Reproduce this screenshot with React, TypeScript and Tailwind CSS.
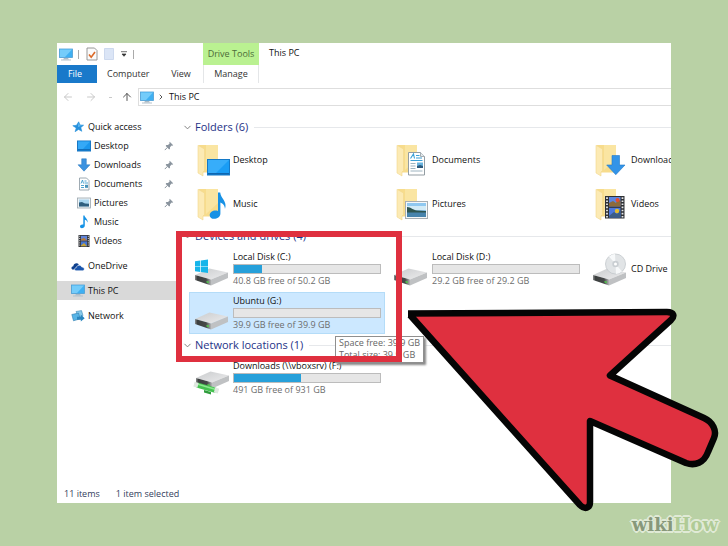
import type { ReactNode } from "react";
import clsx from "clsx";
import { ArrowLeft, ArrowRight, ArrowUp, ChevronDown, ChevronRight } from "lucide-react";

const MonitorIcon = () => (
  <svg viewBox="0 0 14 13" className="h-[13px] w-[14px]">
    <rect x="0.5" y="1" width="13" height="8.5" fill="#3fb0f2" stroke="#4f9fd4" strokeWidth="0.8" />
    <path d="M1 1.5h12L6 9H1z" fill="#74ccfa" />
    <path d="M5 10h4l1 1.4H4z" fill="#a9bac6" />
    <path d="M2 12h10" stroke="#b4c1cb" strokeWidth="1" />
  </svg>
);

const StarIcon = () => (
  <svg viewBox="0 0 12 12" className="h-3 w-3">
    <path d="M6.7.8 8 4l3.6.2-2.8 2.4 1 3.7-3.3-1.9-3.4 2.3 1.1-3.8L.8 4.7l3.7-.4z" fill="#2590dc" stroke="#2590dc" strokeWidth="0.6" />
    <path d="M6.7 1.8 7.7 4.4l2.6.2-4.3 1.4z" fill="#69bff5" />
  </svg>
);

const DesktopIcon = () => (
  <svg viewBox="0 0 14 12" className="h-3 w-[14px]">
    <rect x="0.5" y="1" width="13" height="10" fill="#1b97ee" stroke="#1877c4" />
    <path d="M1 1.5h12L6 9H1z" fill="#35a9f7" />
    <path d="M1 9.8h12" stroke="#0f5fa5" />
  </svg>
);

const DownArrowIcon = () => (
  <svg viewBox="0 0 14 14" className="h-[14px] w-[14px]">
    <path d="M4.7.8h4.6v6H13L7 13.2 1 6.8h3.7z" fill="#3b92e0" stroke="#2573bb" strokeWidth="0.5" />
  </svg>
);

const DocumentIcon = () => (
  <svg viewBox="0 0 14 14" className="h-[14px] w-[14px]">
    <path d="M2.5 1h7l2.5 2.5V13H2.5z" fill="#fff" stroke="#8796a0" strokeWidth="0.8" />
    <path d="M4 6.5 5.5 3l1 3.5M7.5 4h2M7.5 6H11M4 8.5h3M4 10.5h3" stroke="#3c9bcb" strokeWidth="0.9" fill="none" />
    <rect x="8" y="7.8" width="3" height="3" fill="#4a93b8" />
  </svg>
);

const PictureIcon = () => (
  <svg viewBox="0 0 14 12" className="h-3 w-[14px]">
    <rect x="0.5" y="1" width="13" height="10" fill="#eef3f6" stroke="#9aa5ad" strokeWidth="0.8" />
    <rect x="2" y="2.5" width="10" height="7" fill="#a9d6ef" />
    <path d="M2 5.5 5 5l3 1.6 4 .2v2.7H2z" fill="#2f5f7e" />
  </svg>
);

const MusicIcon = () => (
  <svg viewBox="0 0 14 14" className="h-[14px] w-[14px]">
    <path d="M6.3.5h1.2c.3 2.3 3.8 3.5 3 7-.4-1.7-1.4-2.5-2.7-2.8v5.8c0 3-4.8 3.7-4.8 1.1 0-1.7 1.8-2.5 3.3-2z" fill="#1592e6" />
  </svg>
);

const VideoIcon = () => (
  <svg viewBox="0 0 14 14" className="h-[14px] w-[14px]">
    <rect x="1.5" y="1" width="11" height="12" fill="#33353a" />
    <rect x="4" y="1.8" width="6" height="4.7" fill="#5f83d8" />
    <rect x="4" y="7.4" width="6" height="4.8" fill="#4775cf" />
    <path d="M4 5.2 7 3.8l3 2.7H4z" fill="#b77a3a" />
    <path d="M4 11.5 7 9l3 3.2H4z" fill="#c9a437" />
    <path d="M2.7 1.8v11M11.3 1.8v11" stroke="#dcdcdc" strokeDasharray="1 1.2" strokeWidth="1" />
  </svg>
);

const CloudIcon = () => (
  <svg viewBox="0 0 14 12" className="h-3 w-[14px]">
    <path d="M1.2 9.5C-.3 8.3.6 6.2 2.3 6.2 2.5 3.4 6 2 7.8 4.3L5 9.5z" fill="#0e3f8c" />
    <path d="M5 10.8c-2-.3-1.8-3 .3-3.2.5-3 4.6-3.1 5.4-.6 2.8-.2 3.5 3.2 1.2 3.8z" fill="#1a55ac" stroke="#fff" strokeWidth="0.6" />
  </svg>
);

const NetworkIcon = () => (
  <svg viewBox="0 0 14 12" className="h-3 w-[14px]">
    <path d="m5 1.5 5.5-.9 1.5 5-4 2.4z" fill="#8accec" stroke="#3f87b3" strokeWidth="0.6" />
    <path d="M.8 4.5 7.5 3l1.7 5.8-6.7 2z" fill="#57b4e6" stroke="#2d7cae" strokeWidth="0.6" />
    <path d="M6 6.7h3.8V4.6l3.9 3.7-3.9 3.3V9.7H6z" fill="#2b86bf" />
  </svg>
);

const PinIcon = () => (
  <svg viewBox="0 0 10 10" className="h-[10px] w-[10px]">
    <path d="M5.7.8 9.2 4.2l-.9.5-.7-.1-1.6 1.6v1.6l-.8.6L1.7 4.9l.6-.8h1.7L5.6 2.5l-.2-.9z" fill="#8a949e" />
    <path d="M3.4 6.4.8 9.1" stroke="#8a949e" strokeWidth="1" />
  </svg>
);

// Tile pictures share one 34x36 canvas, with the folder or drive drawn first
const TileSvg = ({ children }: { children: ReactNode }) => (
  <svg viewBox="0 0 34 36" className="h-9 w-[34px] shrink-0 overflow-visible">
    {children}
  </svg>
);

const FolderTile = ({ children }: { children: ReactNode }) => (
  <TileSvg>
    <path d="M3 3h19v27.5H7z" fill="#f7dc8c" />
    <path d="M10 3h12v14L10 28z" fill="#fae5a2" />
    <path d="M2 3.3 8.5 7v21.5L7 30v4l-5-3z" fill="#fceab4" stroke="#f2d68c" strokeWidth="0.6" />
    {children}
  </TileSvg>
);

const DriveBody = () => (
  <>
    <defs>
      <linearGradient id="drive-front" x1="0" x2="1">
        <stop offset="0" stopColor="#8b8d8e" />
        <stop offset="0.15" stopColor="#3c3f3f" />
        <stop offset="0.7" stopColor="#454848" />
        <stop offset="1" stopColor="#b4b6b7" />
      </linearGradient>
      <linearGradient id="drive-top" x1="0" x2="1" y2="1">
        <stop offset="0" stopColor="#c9cbcd" />
        <stop offset="1" stopColor="#ededee" />
      </linearGradient>
    </defs>
    <path d="M-1 24 13.5 17.5 32 21.5 15 28.5z" fill="url(#drive-top)" />
    <path d="M15 28.5 32 21.5v5.5L15 34.5z" fill="#bfc1c3" />
    <path d="M-1 24 15 28.5v6L-1 29z" fill="url(#drive-front)" />
    <path d="M10.5 29.9l2.4.7v1.7l-2.4-.7z" fill="#54c94c" />
  </>
);

const tileArt: Record<string, ReactNode> = {
  desktop: (
    <FolderTile>
      <rect x="11.5" y="17.5" width="22" height="15.5" fill="#1a9df5" stroke="#1479c7" />
      <path d="M12 18h21L20 31h-8z" fill="#37adfa" />
      <path d="M12 31.8h21" stroke="#0e5fa8" strokeWidth="1.4" />
    </FolderTile>
  ),
  documents: (
    <FolderTile>
      <path d="M13.5 10.5h12l4 4V33h-16z" fill="#fff" stroke="#939da3" />
      <path d="M25.5 10.5v4h4" fill="#e4e9ec" stroke="#939da3" strokeWidth="0.8" />
      <path d="M15.5 16.5 18.5 12l1 4.5M21 13.5h3.5M21 16h6M15.5 18.5h12" stroke="#3ba0d6" fill="none" strokeWidth="1.1" />
      <path d="M15.5 21.5h5M15.5 24h5M15.5 26.5h5M15.5 29h12" stroke="#9eb4c0" />
      <rect x="22" y="20.5" width="6" height="5.5" fill="#69b3de" />
      <path d="m22 24 3-1 3 1v2h-6z" fill="#2b587b" />
    </FolderTile>
  ),
  downloads: (
    <FolderTile>
      <path d="M18 13.5h7.5V23H31l-9.2 9.7L12.7 23H18z" fill="#3394e8" stroke="#2279c8" strokeWidth="0.6" />
    </FolderTile>
  ),
  music: (
    <FolderTile>
      <path d="M22 6.5h2.2c.4 6 7.4 8.6 4.8 16.5-.4-4-2-5.4-4.6-6.5v11c0 6.2-10.7 7.3-10.7 1.7 0-3.7 4.7-5.6 8.3-4.2z" fill="#1791e5" />
    </FolderTile>
  ),
  pictures: (
    <FolderTile>
      <rect x="10.5" y="15.5" width="22" height="17" fill="#f5f7f8" stroke="#a7aeb3" />
      <rect x="12" y="17" width="19" height="14" fill="#8fc8f0" />
      <path d="M12 20h19v4H12z" fill="#d2ebf7" />
      <path d="M12 21c4 .2 6 3 10 3.5l9 .5v2H12z" fill="#2f5550" />
      <path d="M12 26.5h19V31H12z" fill="#4784ad" />
    </FolderTile>
  ),
  videos: (
    <FolderTile>
      <rect x="11" y="10" width="19.5" height="22.5" fill="#2e3034" />
      <rect x="15" y="11" width="11.5" height="9.5" fill="#5c84e0" />
      <rect x="15" y="21.8" width="11.5" height="9.7" fill="#4c78dc" />
      <path d="m15 17 4-2 3 2 2-4 2.5 2v5.5H15z" fill="#8d6a3a" />
      <circle cx="23.5" cy="14" r="2" fill="#e84b2c" />
      <path d="m15 30 5-4 3 2 3.5-4v7.5H15z" fill="#3c5d86" />
      <circle cx="23" cy="25" r="2.2" fill="#e4bd2c" />
      <path d="M13 11.3v21M28.5 11.3v21" stroke="#e6e8ea" strokeDasharray="1.6 1.5" strokeWidth="1.8" />
    </FolderTile>
  ),
  system: (
    <TileSvg>
      <DriveBody />
      <path d="M-1 10.3 4.3 9.5v5.4H-1zM5 9.4l7-1v6.5H5zM-1 15.6h5.3V21L-1 20.2zM5 15.6h7v6.5l-7-1z" fill="#17b5ea" />
    </TileSvg>
  ),
  drive: (
    <TileSvg>
      <DriveBody />
    </TileSvg>
  ),
  disc: (
    <TileSvg>
      <DriveBody />
      <circle cx="21.5" cy="13" r="10" fill="#e1e4e6" stroke="#c3c8cb" strokeWidth="0.8" />
      <path d="M21.5 13 15 5.5a10 10 0 0 1 6-2.4zM21.5 13l6.5 7.5a10 10 0 0 1-6 2.4z" fill="#f7f9fa" />
      <circle cx="21.5" cy="13" r="3.2" fill="#c9ced2" />
      <circle cx="21.5" cy="13" r="1.5" fill="#fff" />
    </TileSvg>
  ),
  share: (
    <TileSvg>
      <g transform="translate(1 -6)">
        <DriveBody />
      </g>
      <path d="m1 25 19 5.5" stroke="#45c250" strokeWidth="5" />
      <path d="m1 24 19 5.5" stroke="#8be88f" strokeWidth="1.5" />
      <path d="m-2 24.2 4 1.1M18.5 30l4 1.2" stroke="#dfe8e0" strokeWidth="5" />
      <path d="m8 30 7 2v2.5l-7-2z" fill="#2f9c3c" />
    </TileSvg>
  ),
};

type Tile = {
  name: string;
  art: string;
  free?: string;
  used?: number;
  selected?: boolean;
};

const folders: Tile[] = [
  { name: "Desktop", art: "desktop" },
  { name: "Documents", art: "documents" },
  { name: "Downloads", art: "downloads" },
  { name: "Music", art: "music" },
  { name: "Pictures", art: "pictures" },
  { name: "Videos", art: "videos" },
];

const drives: Tile[] = [
  { name: "Local Disk (C:)", art: "system", free: "40.8 GB free of 50.2 GB", used: 19 },
  { name: "Local Disk (D:)", art: "drive", free: "29.2 GB free of 29.2 GB", used: 0 },
  { name: "CD Drive", art: "disc" },
  { name: "Ubuntu (G:)", art: "drive", free: "39.9 GB free of 39.9 GB", used: 0, selected: true },
];

const shares: Tile[] = [
  { name: "Downloads (\\\\vboxsrv) (F:)", art: "share", free: "491 GB free of 931 GB", used: 46 },
];

const quickAccess = [
  { name: "Desktop", icon: <DesktopIcon />, pinned: true },
  { name: "Downloads", icon: <DownArrowIcon />, pinned: true },
  { name: "Documents", icon: <DocumentIcon />, pinned: true },
  { name: "Pictures", icon: <PictureIcon />, pinned: true },
  { name: "Music", icon: <MusicIcon />, pinned: false },
  { name: "Videos", icon: <VideoIcon />, pinned: false },
];

function NavRow({
  icon,
  name,
  nested,
  pinned,
  active,
}: {
  icon: ReactNode;
  name: string;
  nested?: boolean;
  pinned?: boolean;
  active?: boolean;
}) {
  return (
    <a
      href="#"
      className={clsx(
        "flex h-[19px] items-center pr-[2px]",
        nested ? "pl-5" : "pl-[14px]",
        active && "bg-[#d9d9d9]"
      )}
    >
      <span className="flex w-[14px] justify-center">{icon}</span>
      <span className="ml-[3px] flex-1">{name}</span>
      {pinned && <PinIcon />}
    </a>
  );
}

function TileButton({ tile }: { tile: Tile }) {
  return (
    <button
      className={clsx(
        "flex h-[42px] items-center gap-[3px] pl-[7px] text-left whitespace-nowrap",
        tile.selected && "bg-[#cce8ff] outline outline-1 -outline-offset-1 outline-[#b4dcf8]"
      )}
    >
      {tileArt[tile.art]}
      {tile.free ? (
        <span className="flex flex-col">
          <span className="leading-[14px]">{tile.name}</span>
          <span
            role="progressbar"
            aria-label={tile.name}
            aria-valuenow={tile.used}
            className="block h-[10px] w-[148px] border border-[#bcbcbc] bg-[#e6e6e6]"
          >
            <span className="block h-full bg-[#26a0da]" style={{ width: `${tile.used}%` }} />
          </span>
          <span className="leading-[14px] text-[#6d6d6d]">{tile.free}</span>
        </span>
      ) : (
        <span>{tile.name}</span>
      )}
    </button>
  );
}

function Group({ title, tiles }: { title: string; tiles: Tile[] }) {
  return (
    <section>
      <h2 className="flex h-[23px] items-center pl-[6px] text-[11px] whitespace-nowrap text-[#1e3287]">
        <ChevronDown size={11} strokeWidth={2} className="text-[#777]" />
        <span className="ml-[2px]">{title}</span>
        <span className="ml-[6px] h-px flex-1 bg-[#e6e8eb]" />
      </h2>
      <div className="grid grid-cols-[repeat(3,196px)] gap-x-[3px] gap-y-[2px] pl-[13px]">
        {tiles.map((tile) => (
          <TileButton key={tile.name} tile={tile} />
        ))}
      </div>
    </section>
  );
}

function TitleBar() {
  return (
    <header className="flex h-[22px] items-stretch">
      <div className="flex w-[146px] items-center pl-[2px]">
        <MonitorIcon />
        <span className="ml-[5px] h-[9px] w-px bg-[#aaa]" />
        <svg viewBox="0 0 12 14" className="ml-[7px] h-[14px] w-3">
          <path d="M1 1h7.5L11 3.5V13H1z" fill="#fbfbfb" stroke="#8d8d8d" strokeWidth="0.9" />
          <path d="m3 7.5 2.2 2.7L9 5" stroke="#dc6a28" strokeWidth="1.6" fill="none" />
        </svg>
        <svg viewBox="0 0 10 12" className="ml-[6px] h-3 w-[10px]">
          <path d="M.5.5h9v11h-9z" fill="#dbe5f6" stroke="#cdd9ee" />
        </svg>
        <svg viewBox="0 0 6 6" className="ml-[7px] h-[6px] w-[6px]">
          <path d="M0 .7h6M1 3h4L3 5.3z" fill="#333" stroke="#333" strokeWidth="0.7" />
        </svg>
        <span className="ml-[6px] h-[9px] w-px bg-[#aaa]" />
      </div>
      <div className="flex w-14 items-center justify-center bg-[#baf191] text-[#4c6b38]">Drive Tools</div>
      <h1 className="pl-[10px] leading-5">This PC</h1>
    </header>
  );
}

const Cursor = () => (
  <svg viewBox="404 305 320 210" className="pointer-events-none absolute top-[262px] left-[347px] h-[210px] w-[320px]">
    <path
      d="M408 313.5 667 312C674 312 675 316 671 320L610 375.5 704 418C713 422 717 431 714 438L708 452C704 463 695 466 686 463L590 421V502C590 508 585 510 580 505L410 315"
      fill="#df303f"
      stroke="#050505"
      strokeWidth="6.5"
      strokeLinejoin="round"
    />
  </svg>
);

export default function App() {
  return (
    <main className="relative flex min-h-screen flex-col bg-[#b9d1a5] px-[57px] py-[43px] font-['Open_Sans',sans-serif] text-[9px] text-[#111]">
      <div className="relative flex flex-1 flex-col">
        <div className="flex flex-1 flex-col overflow-hidden bg-white">
          <TitleBar />
          <nav className="flex h-[18px] items-stretch text-[#333]">
            <button className="w-10 bg-[#1979ca] pr-1 text-white">File</button>
            <button className="ml-[10px] w-[42px]">Computer</button>
            <button className="ml-5 w-[24px]">View</button>
            <button className="ml-[10px] w-14 border-x border-[#e4e6e8]">Manage</button>
          </nav>

          <div className="mt-[5px] flex h-[18px] items-center">
            <div className="flex w-[81px] items-center pl-[5px] text-[#c9c9c9]">
              <button aria-label="Back"><ArrowLeft size={12} /></button>
              <button aria-label="Forward" className="ml-[11px]"><ArrowRight size={12} /></button>
              <span className="ml-3 h-px w-[3px] bg-[#c9c9c9]" />
              <button aria-label="Up" className="ml-[9px] text-[#555]"><ArrowUp size={12} /></button>
            </div>
            <div className="flex h-[18px] flex-1 items-center border border-r-0 border-[#dedede] pl-px">
              <MonitorIcon />
              <ChevronRight size={8} strokeWidth={3} className="ml-[3px] text-[#555]" />
              <button className="ml-1">This PC</button>
            </div>
          </div>

          <div className="flex flex-1 pt-[10px]">
            <aside className="flex w-[119px] shrink-0 flex-col gap-[6px] pt-px">
              <div>
                <NavRow icon={<StarIcon />} name="Quick access" />
                {quickAccess.map((item) => (
                  <NavRow key={item.name} nested {...item} />
                ))}
              </div>
              <NavRow icon={<CloudIcon />} name="OneDrive" />
              <NavRow icon={<MonitorIcon />} name="This PC" active />
              <NavRow icon={<NetworkIcon />} name="Network" />
            </aside>
            <div className="min-w-0 flex-1 overflow-hidden">
              <Group title="Folders (6)" tiles={folders} />
              <Group title="Devices and drives (4)" tiles={drives} />
              <Group title="Network locations (1)" tiles={shares} />
            </div>
          </div>

          <footer className="flex h-[18px] items-center gap-4 pl-[7px] text-[#33405c]">
            <span>11 items</span>
            <span>1 item selected</span>
          </footer>
        </div>

        {/* Drive tooltip */}
        <div
          role="tooltip"
          className="absolute top-[293px] left-[278px] border border-[#8f8f8f] bg-white px-[3px] pb-px leading-3 whitespace-nowrap text-[#666] shadow-[2px_2px_2px_#888]"
        >
          <p>Space free: 39.9 GB</p>
          <p>Total size: 39.9 GB</p>
        </div>

        {/* Highlight frame and pointer */}
        <div className="pointer-events-none absolute top-[188px] left-[119px] h-[131px] w-[226px] border-[6px] border-[#df303f]" />
        <Cursor />
      </div>

      <a
        href="#"
        className="absolute right-[10px] bottom-[9px] font-['DejaVu_Serif',serif] text-[18px] leading-6 font-bold [text-shadow:2px_0_#e0ead6,-2px_0_#e0ead6,0_2px_#e0ead6,0_-2px_#e0ead6,1px_1px_#e0ead6,-1px_-1px_#e0ead6,1px_-1px_#e0ead6,-1px_1px_#e0ead6]"
      >
        <span className="text-[#87987a]">wiki</span>
        <span className="text-[#b0cb96]">How</span>
      </a>
    </main>
  );
}
